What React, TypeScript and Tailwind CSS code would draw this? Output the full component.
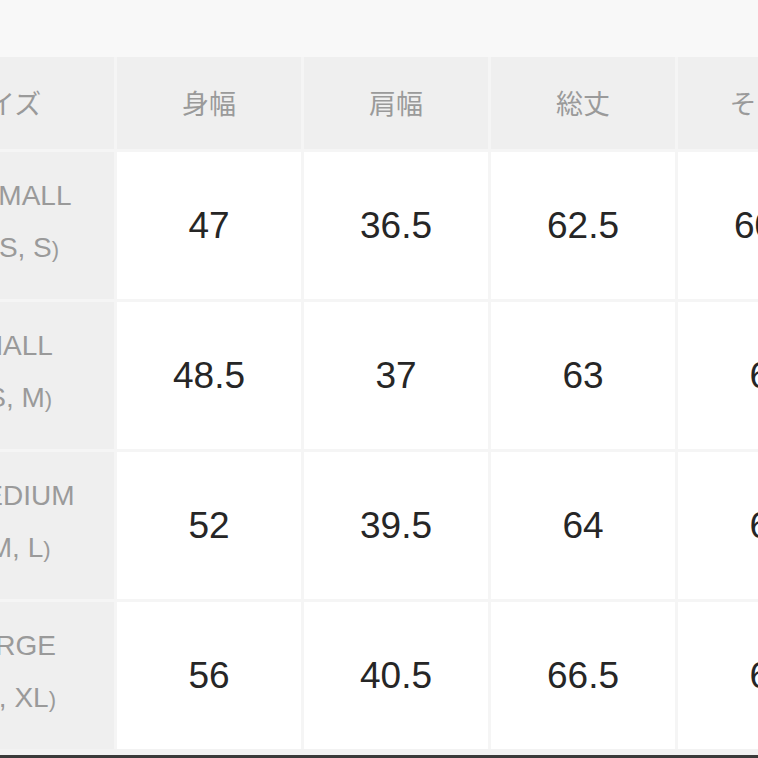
const headers = ["身幅", "肩幅", "総丈", "そで丈"];

const rows = [
  { name: "XSMALL", alt: "XS, S", values: ["47", "36.5", "62.5", "60.5"] },
  { name: "SMALL", alt: "S, M", values: ["48.5", "37", "63", "61"] },
  { name: "MEDIUM", alt: "M, L", values: ["52", "39.5", "64", "62"] },
  { name: "LARGE", alt: "L, XL", values: ["56", "40.5", "66.5", "63"] },
];

const sans = "font-['Liberation_Sans','Noto_Sans_CJK_JP',sans-serif]";
const jp = "font-['Noto_Sans_CJK_JP',sans-serif]";

export default function App() {
  return (
    <div className={`w-[758px] h-[758px] overflow-hidden bg-[#f8f8f8] flex flex-col ${sans}`}>
      <div className="h-[57px] shrink-0" />

      <div className="ml-[-82px] grid grid-cols-[196px_184px_184px_184px_184px] grid-rows-[92px_147px_147px_147px_147px] gap-[3px] bg-[#f5f5f5] shrink-0">
        {/* header row */}
        <div className={`bg-[#efefef] flex items-center pl-[43px] text-[27px] text-[#9a9a9a] ${jp}`}>
          サイズ
        </div>
        {headers.map((h) => (
          <div
            key={h}
            className={`bg-[#efefef] flex items-center justify-center text-[27px] text-[#9a9a9a] ${jp}`}
          >
            {h}
          </div>
        ))}

        {rows.map((r) => (
          <>
            <div
              key={r.name}
              className="bg-[#efefef] flex flex-col items-center justify-center pb-[6px] text-[28px] leading-[52px] text-[#9a9a9a]"
            >
              <span className="self-start pl-[43px]">{r.name}</span>
              <span>
                <span className="text-[22px]">(</span>
                {r.alt}
                <span className="text-[22px]">)</span>
              </span>
            </div>
            {r.values.map((v, i) => (
              <div
                key={r.name + i}
                className="bg-white flex items-center justify-center text-[37px] text-[#262626]"
              >
                {v}
              </div>
            ))}
          </>
        ))}
      </div>

      <div className="h-[6px] shrink-0 bg-[#f2f2f2]" />
      <div className="flex-1 bg-[#3a3a3a]" />
    </div>
  );
}
